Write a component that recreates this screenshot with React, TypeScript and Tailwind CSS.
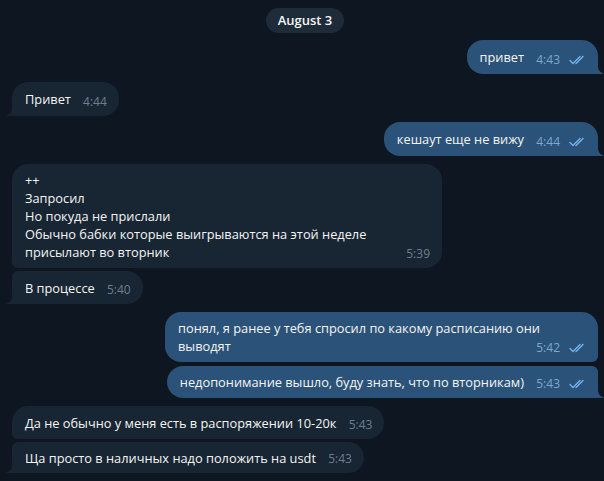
import React from "react";

type Msg = {
  text: string;
  time: string;
  out?: boolean;
  pos: "single" | "first" | "last";
  w?: string;
  mt: string;
  py: string;
};

const messages: Msg[] = [
  { text: "привет", time: "4:43", out: true, pos: "single", mt: "mt-[7px]", py: "pt-[8px] pb-[8px]" },
  { text: "Привет", time: "4:44", pos: "single", mt: "mt-[8px]", py: "pt-[8px] pb-[8px]" },
  { text: "кешаут еще не вижу", time: "4:44", out: true, pos: "single", mt: "mt-[6px]", py: "pt-[8px] pb-[8px]" },
  {
    text: "++\nЗапросил\nНо покуда не прислали\nОбычно бабки которые выигрываются на этой неделе\nприсылают во вторник",
    time: "5:39",
    pos: "first",
    w: "w-[430px]",
    mt: "mt-[8px]",
    py: "pt-[7px] pb-[7px]",
  },
  { text: "В процессе", time: "5:40", pos: "last", mt: "mt-[3px]", py: "pt-[8px] pb-[7px]" },
  {
    text: "понял, я ранее у тебя спросил по какому расписанию они\nвыводят",
    time: "5:42",
    out: true,
    pos: "first",
    w: "w-[433px]",
    mt: "mt-[8px]",
    py: "pt-[7px] pb-[7px]",
  },
  {
    text: "недопонимание вышло, буду знать, что по вторникам)",
    time: "5:43",
    out: true,
    pos: "last",
    mt: "mt-[4px]",
    py: "pt-[7px] pb-[7px]",
  },
  { text: "Да не обычно у меня есть в распоряжении 10-20к", time: "5:43", pos: "first", mt: "mt-[8px]", py: "pt-[8px] pb-[7px]" },
  { text: "Ща просто в наличных надо положить на usdt", time: "5:43", pos: "last", mt: "mt-[3px]", py: "pt-[7px] pb-[6px]" },
];

function Checks() {
  return (
    <svg width="17" height="10" viewBox="0 0 17 10" fill="none" stroke="#72b3ee" strokeWidth="1.4" strokeLinecap="round" strokeLinejoin="round">
      <path d="M1 5.5 L4 8.5 L11 1.5" />
      <path d="M7 8.5 L14 1.5" />
    </svg>
  );
}

function Tail({ out, color }: { out?: boolean; color: string }) {
  if (out) {
    return (
      <svg className="absolute bottom-0 right-[-6px]" width="7" height="14" viewBox="0 0 7 14">
        <path d="M0 0 Q0 12 7 14 H0 Z" fill={color} />
      </svg>
    );
  }
  return (
    <svg className="absolute bottom-0 left-[-6px]" width="7" height="14" viewBox="0 0 7 14">
      <path d="M7 0 Q7 12 0 14 H7 Z" fill={color} />
    </svg>
  );
}

function Bubble({ m }: { m: Msg }) {
  const color = m.out ? "#2b5278" : "#182533";
  let corners = "";
  if (m.out) {
    if (m.pos === "single") corners = "rounded-[16px] rounded-br-none";
    if (m.pos === "first") corners = "rounded-[16px] rounded-br-[6px]";
    if (m.pos === "last") corners = "rounded-[16px] rounded-tr-[6px] rounded-br-none";
  } else {
    if (m.pos === "single") corners = "rounded-[16px] rounded-bl-none";
    if (m.pos === "first") corners = "rounded-[16px] rounded-bl-[6px]";
    if (m.pos === "last") corners = "rounded-[16px] rounded-tl-[6px] rounded-bl-none";
  }
  const hasTail = m.pos !== "first";
  const lines = m.text.split("\n");

  return (
    <div className={`flex ${m.out ? "justify-end" : "justify-start"} ${m.mt}`}>
      <div
        className={`relative ${corners} ${m.w ?? ""} ${m.py} pl-[13px] pr-[12px] text-[12.8px] leading-[18px] text-[#f5f5f5] ${
          m.out ? "bg-[#2b5278]" : "bg-[#182533]"
        }`}
      >
        {lines.map((line, i) => (
          <div key={i}>
            <span>{line}</span>
            {i === lines.length - 1 && <span className={`inline-block ${m.out ? "w-[62px]" : "w-[36px]"}`} />}
          </div>
        ))}
        <span className="absolute bottom-[6px] right-[12px] flex items-center gap-[9px] text-[12px] leading-[16px]">
          <span className={m.out ? "text-[#7da8d3]" : "text-[#6d7f8f]"}>{m.time}</span>
          {m.out && <Checks />}
        </span>
        {hasTail && <Tail out={m.out} color={color} />}
      </div>
    </div>
  );
}

export default function App() {
  return (
    <div
      className="w-[604px] h-[481px] overflow-hidden bg-[#0e1621] pl-[12px] pr-[6px] pt-[8px]"
      style={{ fontFamily: '"Open Sans", "Noto Sans", sans-serif' }}
    >
      <div className="flex justify-center">
        <div className="h-[25px] rounded-full bg-[#1e2c3a] px-[12px] text-[13px] font-semibold leading-[25px] text-[#f5f5f5]">
          August 3
        </div>
      </div>
      {messages.map((m, i) => (
        <Bubble key={i} m={m} />
      ))}
    </div>
  );
}
